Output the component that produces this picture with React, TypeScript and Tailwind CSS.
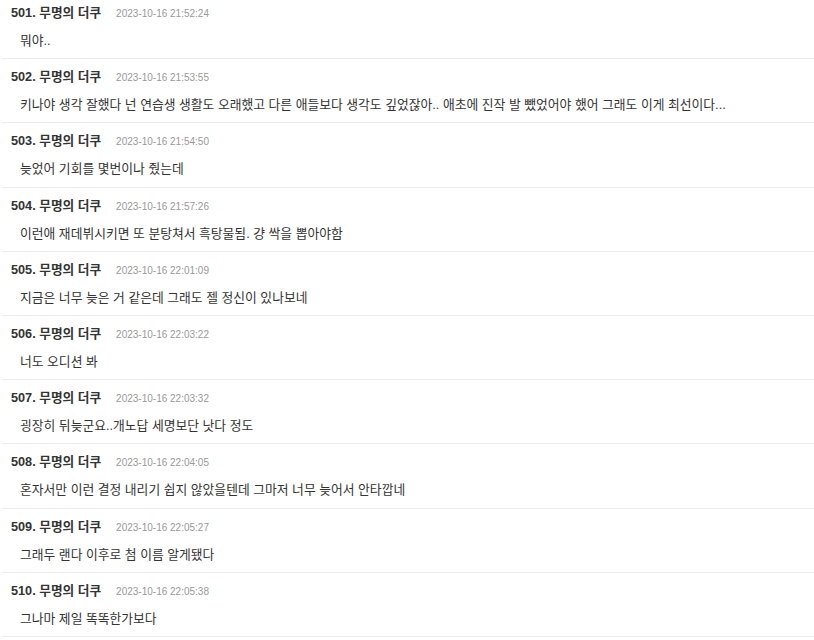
const comments = [
  { no: 501, date: '2023-10-16 21:52:24', text: '뭐야..' },
  { no: 502, date: '2023-10-16 21:53:55', text: '키나야 생각 잘했다 넌 연습생 생활도 오래했고 다른 애들보다 생각도 깊었잖아.. 애초에 진작 발 뺐었어야 했어 그래도 이게 최선이다...' },
  { no: 503, date: '2023-10-16 21:54:50', text: '늦었어 기회를 몇번이나 줬는데' },
  { no: 504, date: '2023-10-16 21:57:26', text: '이런애 재데뷔시키면 또 분탕쳐서 흑탕물됨. 걍 싹을 뽑아야함' },
  { no: 505, date: '2023-10-16 22:01:09', text: '지금은 너무 늦은 거 같은데 그래도 젤 정신이 있나보네' },
  { no: 506, date: '2023-10-16 22:03:22', text: '너도 오디션 봐' },
  { no: 507, date: '2023-10-16 22:03:32', text: '굉장히 뒤늦군요..개노답 세명보단 낫다 정도' },
  { no: 508, date: '2023-10-16 22:04:05', text: '혼자서만 이런 결정 내리기 쉽지 않았을텐데 그마저 너무 늦어서 안타깝네' },
  { no: 509, date: '2023-10-16 22:05:27', text: '그래두 랜다 이후로 첨 이름 알게됐다' },
  { no: 510, date: '2023-10-16 22:05:38', text: '그나마 제일 똑똑한가보다' },
];

function CommentRow({ c }: { c: (typeof comments)[number] }) {
  return (
    <li className="border-b border-[#ebebeb] pt-2 pb-[7.2px]">
      <div className="flex items-baseline h-5 leading-5 pl-[9px]">
        <span className="text-[12.7px] font-bold text-[#333]">{c.no}. 무명의 더쿠</span>
        <span className="ml-[15px] text-[10px] text-[#999]">{c.date}</span>
      </div>
      <p className="mt-2 pl-[18px] text-[12.8px] leading-5 text-[#333]">{c.text}</p>
    </li>
  );
}

export default function App() {
  return (
    <div className="bg-white min-h-screen font-['Liberation_Sans','Noto_Sans_CJK_KR',sans-serif] overflow-hidden h-[640px]">
      <ul className="mt-[-5px] ml-[2px]">
        {comments.map((c) => (
          <CommentRow key={c.no} c={c} />
        ))}
      </ul>
    </div>
  );
}
